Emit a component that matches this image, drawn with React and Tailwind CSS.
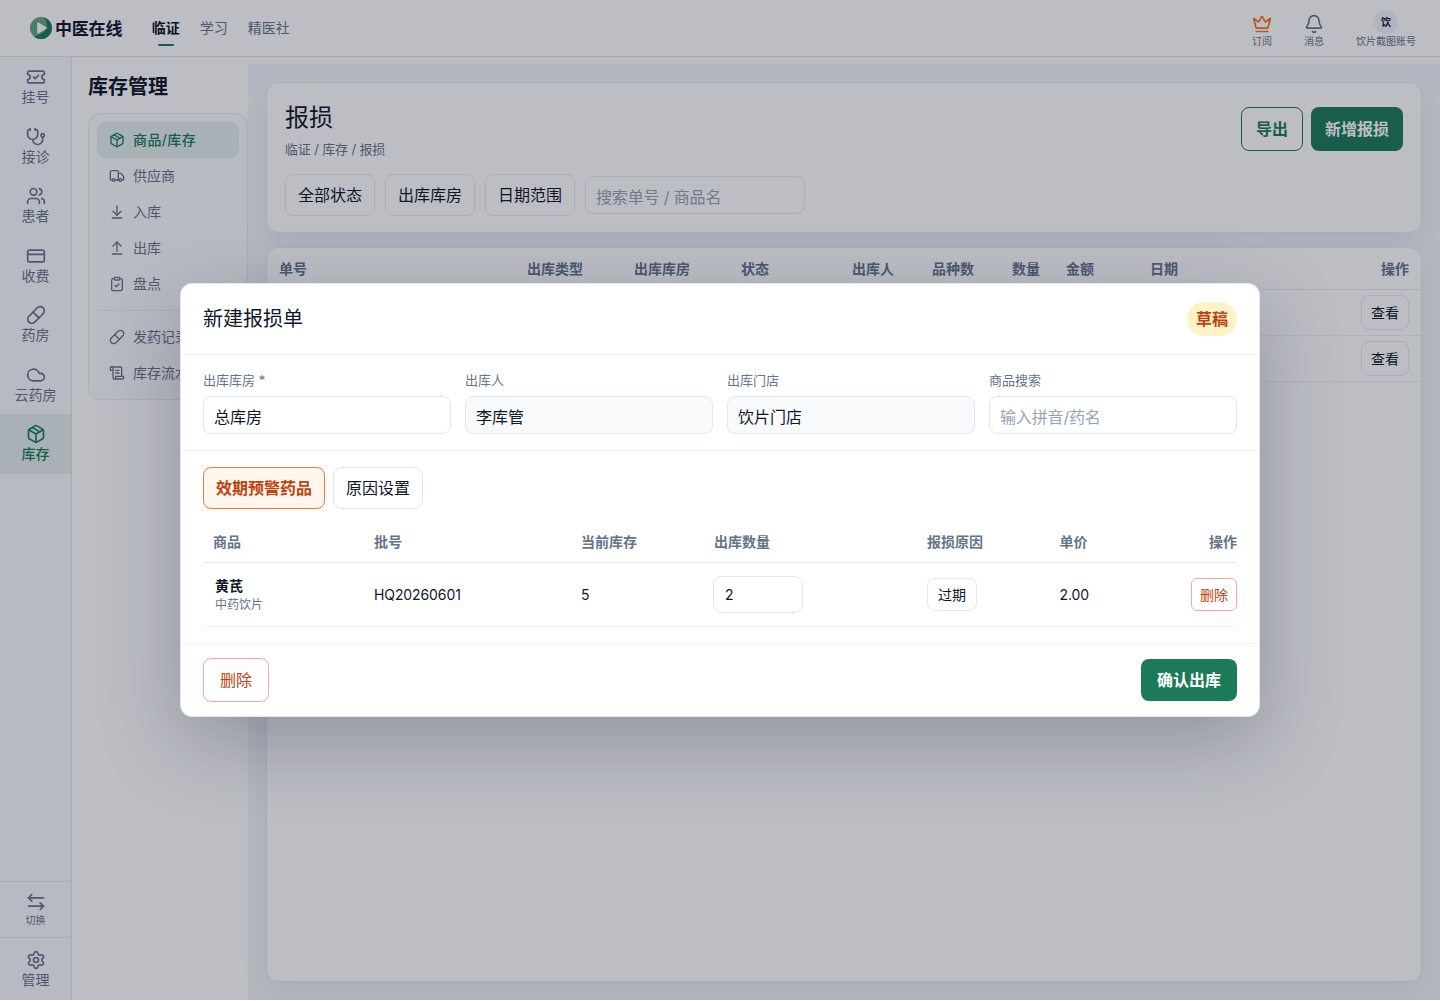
import React from "react";
import {
  ArrowDownToLine,
  ArrowUpFromLine,
  Bell,
  ClipboardCheck,
  Cloud,
  CreditCard,
  Crown,
  Package,
  Pill,
  ScrollText,
  Settings,
  Stethoscope,
  TicketCheck,
  Truck,
  Users,
} from "lucide-react";

const sideItems = [
  { label: "挂号", icon: TicketCheck },
  { label: "接诊", icon: Stethoscope },
  { label: "患者", icon: Users },
  { label: "收费", icon: CreditCard },
  { label: "药房", icon: Pill },
  { label: "云药房", icon: Cloud },
  { label: "库存", icon: Package, active: true },
];

const menuItems = [
  { label: "商品/库存", icon: Package, active: true },
  { label: "供应商", icon: Truck },
  { label: "入库", icon: ArrowDownToLine },
  { label: "出库", icon: ArrowUpFromLine },
  { label: "盘点", icon: ClipboardCheck },
];

const recordItems = [
  { label: "发药记录", icon: Pill },
  { label: "库存流水", icon: ScrollText },
];

const filters = ["全部状态", "出库库房", "日期范围"];

const Logo = () => (
  <svg width="22" height="22" viewBox="0 0 22 22">
    <circle cx="11" cy="11" r="11" fill="#64a57c" />
    <path
      d="M14 .4A11 11 0 0 1 22 11 11 11 0 0 1 4 19.500C8 18.500 17 15 17 9 17 5 15.500 2.500 14 .4Z"
      fill="#1d7a58"
    />
    <path
      d="M8 6.300v9.400L16 11z"
      fill="#fff"
      stroke="#fff"
      strokeWidth="1.600"
      strokeLinejoin="round"
    />
  </svg>
);

const SwitchIcon = () => (
  <svg
    width="20"
    height="20"
    viewBox="0 0 24 24"
    fill="none"
    stroke="currentColor"
    strokeWidth="2"
    strokeLinecap="round"
    strokeLinejoin="round"
  >
    <path d="M7 3 3 7l4 4" />
    <path d="M3 7h18" />
    <path d="m17 13 4 4-4 4" />
    <path d="M21 17H3" />
  </svg>
);

const Header = () => (
  <header className="flex h-[57px] shrink-0 items-center justify-between border-b border-[#dfe3ea] bg-white pr-6 pl-[30px]">
    <div className="flex items-center">
      <Logo />
      <span className="mt-px ml-[3px] text-[17px] leading-6 font-bold tracking-[-0.2px]">
        中医在线
      </span>
      <nav className="ml-[29.5px] flex gap-5 text-sm text-[#64748b]">
        <span className="relative font-bold text-[#0f172a]">
          临证
          <i className="absolute -bottom-2 left-1.5 h-0.5 w-4 rounded-full bg-[#1d7a58]" />
        </span>
        <span>学习</span>
        <span>精医社</span>
      </nav>
    </div>
    <div className="mt-0.5 flex gap-8 text-[10px] leading-[14px] text-[#64748b]">
      <div className="flex flex-col items-center pt-1">
        <Crown size={20} className="text-[#f97316]" />
        <span>订阅</span>
      </div>
      <div className="flex flex-col items-center pt-1">
        <Bell size={20} />
        <span>消息</span>
      </div>
      <div className="flex flex-col items-center">
        <span className="flex h-6 w-6 items-center justify-center rounded-full bg-[#eef2f9] font-bold text-[#0f172a]">
          饮
        </span>
        <span>饮片截图账号</span>
      </div>
    </div>
  </header>
);

const Sidebar = () => (
  <aside className="flex w-[72px] shrink-0 flex-col border-r border-[#dfe3ea] bg-[#f8fafc] text-sm leading-5 text-[#64748b]">
    {sideItems.map(({ label, icon: Icon, active }) => (
      <div
        key={label}
        className={`flex h-[59.5px] flex-col items-center pt-2.5 ${
          active ? "bg-[#e3efec] font-medium text-[#1d7a58]" : ""
        }`}
      >
        <Icon size={20} />
        <span>{label}</span>
      </div>
    ))}
    <div className="mt-auto flex h-14 flex-col items-center border-t border-[#dfe3ea] pt-2.5">
      <SwitchIcon />
      <span className="text-[10px] leading-4">切换</span>
    </div>
    <div className="flex h-[63px] flex-col items-center border-t border-[#dfe3ea] pt-3">
      <Settings size={20} />
      <span>管理</span>
    </div>
  </aside>
);

const MenuItem = ({ label, icon: Icon, active }) => (
  <div
    className={`flex h-9 items-center gap-2 rounded-lg px-3 whitespace-nowrap ${
      active
        ? "bg-[#e3efec] font-medium tracking-[0.4px] text-[#1d7a58]"
        : ""
    }`}
  >
    <Icon size={16} />
    {label}
  </div>
);

const InventoryMenu = () => (
  <div className="w-44 shrink-0 bg-white pl-4">
    <h2 className="pt-4 text-xl leading-7 font-bold">库存管理</h2>
    <div className="mt-3 rounded-xl border border-[#e5e9f0] bg-[#fafbfd] p-2 text-sm text-[#64748b]">
      {menuItems.map((item) => (
        <MenuItem key={item.label} {...item} />
      ))}
      <div className="my-2 h-px bg-[#e5e9f0]" />
      {recordItems.map((item) => (
        <MenuItem key={item.label} {...item} />
      ))}
    </div>
  </div>
);

const PageHead = () => (
  <section className="h-[151px] shrink-0 rounded-xl border border-[#e2e8f0] bg-white px-[18px] pt-[18px] shadow-[0_10px_30px_rgba(15,23,42,0.06)]">
    <div className="flex justify-between">
      <div>
        <h1 className="pt-px text-2xl leading-8">报损</h1>
        <p className="mt-[5px] text-[13px] leading-5 tracking-[-0.15px] text-[#64748b]">
          临证 / 库存 / 报损
        </p>
      </div>
      <div className="mt-1.5 flex h-11 gap-2 font-bold">
        <button className="w-[62px] rounded-lg border border-[#1d7a58] text-[#1d7a58]">
          导出
        </button>
        <button className="w-[92px] rounded-lg bg-[#1d7a58] text-white">
          新增报损
        </button>
      </div>
    </div>
    <div className="mt-[15px] flex items-center gap-2.5">
      {filters.map((f) => (
        <button
          key={f}
          className="h-[42px] w-[90px] rounded-lg border border-[#e2e8f0]"
        >
          {f}
        </button>
      ))}
      <input
        className="h-[38px] w-[220px] rounded-lg border border-[#e2e8f0] px-2.5 pt-1 tracking-[-0.15px] placeholder:text-[#94a3b8]"
        placeholder="搜索单号 / 商品名"
      />
    </div>
  </section>
);

const LossTable = () => (
  <section className="mt-3.5 flex-1 rounded-xl border border-[#e2e8f0] bg-white text-sm shadow-[0_10px_30px_rgba(15,23,42,0.06)]">
    <div className="flex h-[42px] items-center border-b border-[#e2e8f0] px-3 font-bold text-[#64748b]">
      <span className="w-[248px]">单号</span>
      <span className="w-[107px]">出库类型</span>
      <span className="w-[107px]">出库库房</span>
      <span className="w-[111px]">状态</span>
      <span className="w-20">出库人</span>
      <span className="w-20">品种数</span>
      <span className="w-[54px]">数量</span>
      <span className="w-[84px]">金额</span>
      <span>日期</span>
      <span className="ml-auto">操作</span>
    </div>
    {[1, 2].map((row) => (
      <div
        key={row}
        className="flex h-[46px] items-center justify-end border-b border-[#edf0f5] px-3"
      >
        <button className="h-[35px] w-12 rounded-lg border border-[#e2e8f0]">
          查看
        </button>
      </div>
    ))}
  </section>
);

const Field = ({ label, value, placeholder, readOnly }) => (
  <label className="flex flex-1 flex-col text-[13px] leading-5 text-[#64748b]">
    {label}
    <input
      className={`mt-1.5 h-[38px] w-full rounded-lg border border-[#e2e8f0] px-2.5 text-base text-[#0f172a] placeholder:tracking-[-0.15px] placeholder:text-[#94a3b8] ${
        value ? "pt-0.5" : "pt-1"
      } ${readOnly ? "bg-[#f8fafc]" : "bg-white"}`}
      defaultValue={value}
      placeholder={placeholder}
      readOnly={readOnly}
    />
  </label>
);

const LossDialog = () => (
  <div className="flex h-[434px] w-[1080px] flex-col rounded-xl border border-[#e2e8f0] bg-white shadow-[0_24px_80px_rgba(15,23,42,0.25)]">
    <div className="flex h-[71px] shrink-0 items-center justify-between border-b border-[#f1f5f9] px-[22px]">
      <h3 className="text-xl">新建报损单</h3>
      <span className="rounded-full bg-[#fef3c7] px-[9px] py-[5px] font-bold text-[#c2410c]">
        草稿
      </span>
    </div>
    <div className="flex h-24 shrink-0 gap-3.5 border-b border-[#f1f5f9] px-[22px] pt-[15px]">
      <Field label="出库库房 *" value="总库房" />
      <Field label="出库人" value="李库管" readOnly />
      <Field label="出库门店" value="饮片门店" readOnly />
      <Field label="商品搜索" placeholder="输入拼音/药名" />
    </div>
    <div className="flex flex-1 flex-col px-[22px] pt-4">
      <div className="flex h-[42px] gap-2">
        <button className="w-[122px] rounded-lg border border-[#ed7b35] bg-[#fff7ed] font-bold text-[#c2410c]">
          效期预警药品
        </button>
        <button className="w-[90px] rounded-lg border border-[#e2e8f0]">
          原因设置
        </button>
      </div>
      <div className="mt-3 flex h-[42px] items-center border-b border-[#e8ebf0] text-sm font-bold text-[#64748b]">
        <span className="w-[171px] pl-2.5">商品</span>
        <span className="w-[207px]">批号</span>
        <span className="w-[132px]">当前库存</span>
        <span className="w-[214px] pl-px">出库数量</span>
        <span className="w-[132.5px]">报损原因</span>
        <span>单价</span>
        <span className="ml-auto">操作</span>
      </div>
      <div className="flex h-16 items-center border-b border-[#f1f5f9] text-sm tracking-[-0.1px]">
        <div className="w-[171px] pt-0.5 pl-3 tracking-normal">
          <div className="leading-[18px] font-bold">黄芪</div>
          <div className="text-xs leading-[19px] text-[#64748b]">中药饮片</div>
        </div>
        <span className="w-[207px]">HQ20260601</span>
        <span className="w-[132px]">5</span>
        <div className="w-[214px]">
          <input
            className="h-[37px] w-[90px] rounded-lg border border-[#e2e8f0] px-[11px]"
            defaultValue="2"
          />
        </div>
        <div className="w-[132.5px]">
          <button className="h-[33px] w-[50px] rounded-lg border border-[#e2e8f0] tracking-normal">
            过期
          </button>
        </div>
        <span>2.00</span>
        <button className="ml-auto h-[33px] w-[46px] rounded-md border border-[#fca5a5] tracking-normal text-[#c2410c]">
          删除
        </button>
      </div>
    </div>
    <div className="flex h-[73px] shrink-0 items-center justify-between border-t border-[#f1f5f9] px-[22px]">
      <button className="h-11 w-[66px] rounded-lg border border-[#fca5a5] text-[#c2410c]">
        删除
      </button>
      <button className="h-[42px] w-24 rounded-lg bg-[#1d7a58] font-bold text-white">
        确认出库
      </button>
    </div>
  </div>
);

export default function App() {
  return (
    <div className="relative flex h-[1000px] flex-col overflow-hidden bg-white font-['Inter','Noto_Sans_CJK_SC',sans-serif] text-base text-[#0f172a]">
      <Header />
      <div className="flex min-h-0 flex-1">
        <Sidebar />
        <InventoryMenu />
        <main className="mt-[7px] flex flex-1 flex-col bg-[#f3f6fb] p-[18px]">
          <PageHead />
          <LossTable />
        </main>
      </div>
      <div className="absolute inset-0 flex items-center justify-center bg-[#0f172a]/28">
        <LossDialog />
      </div>
    </div>
  );
}
